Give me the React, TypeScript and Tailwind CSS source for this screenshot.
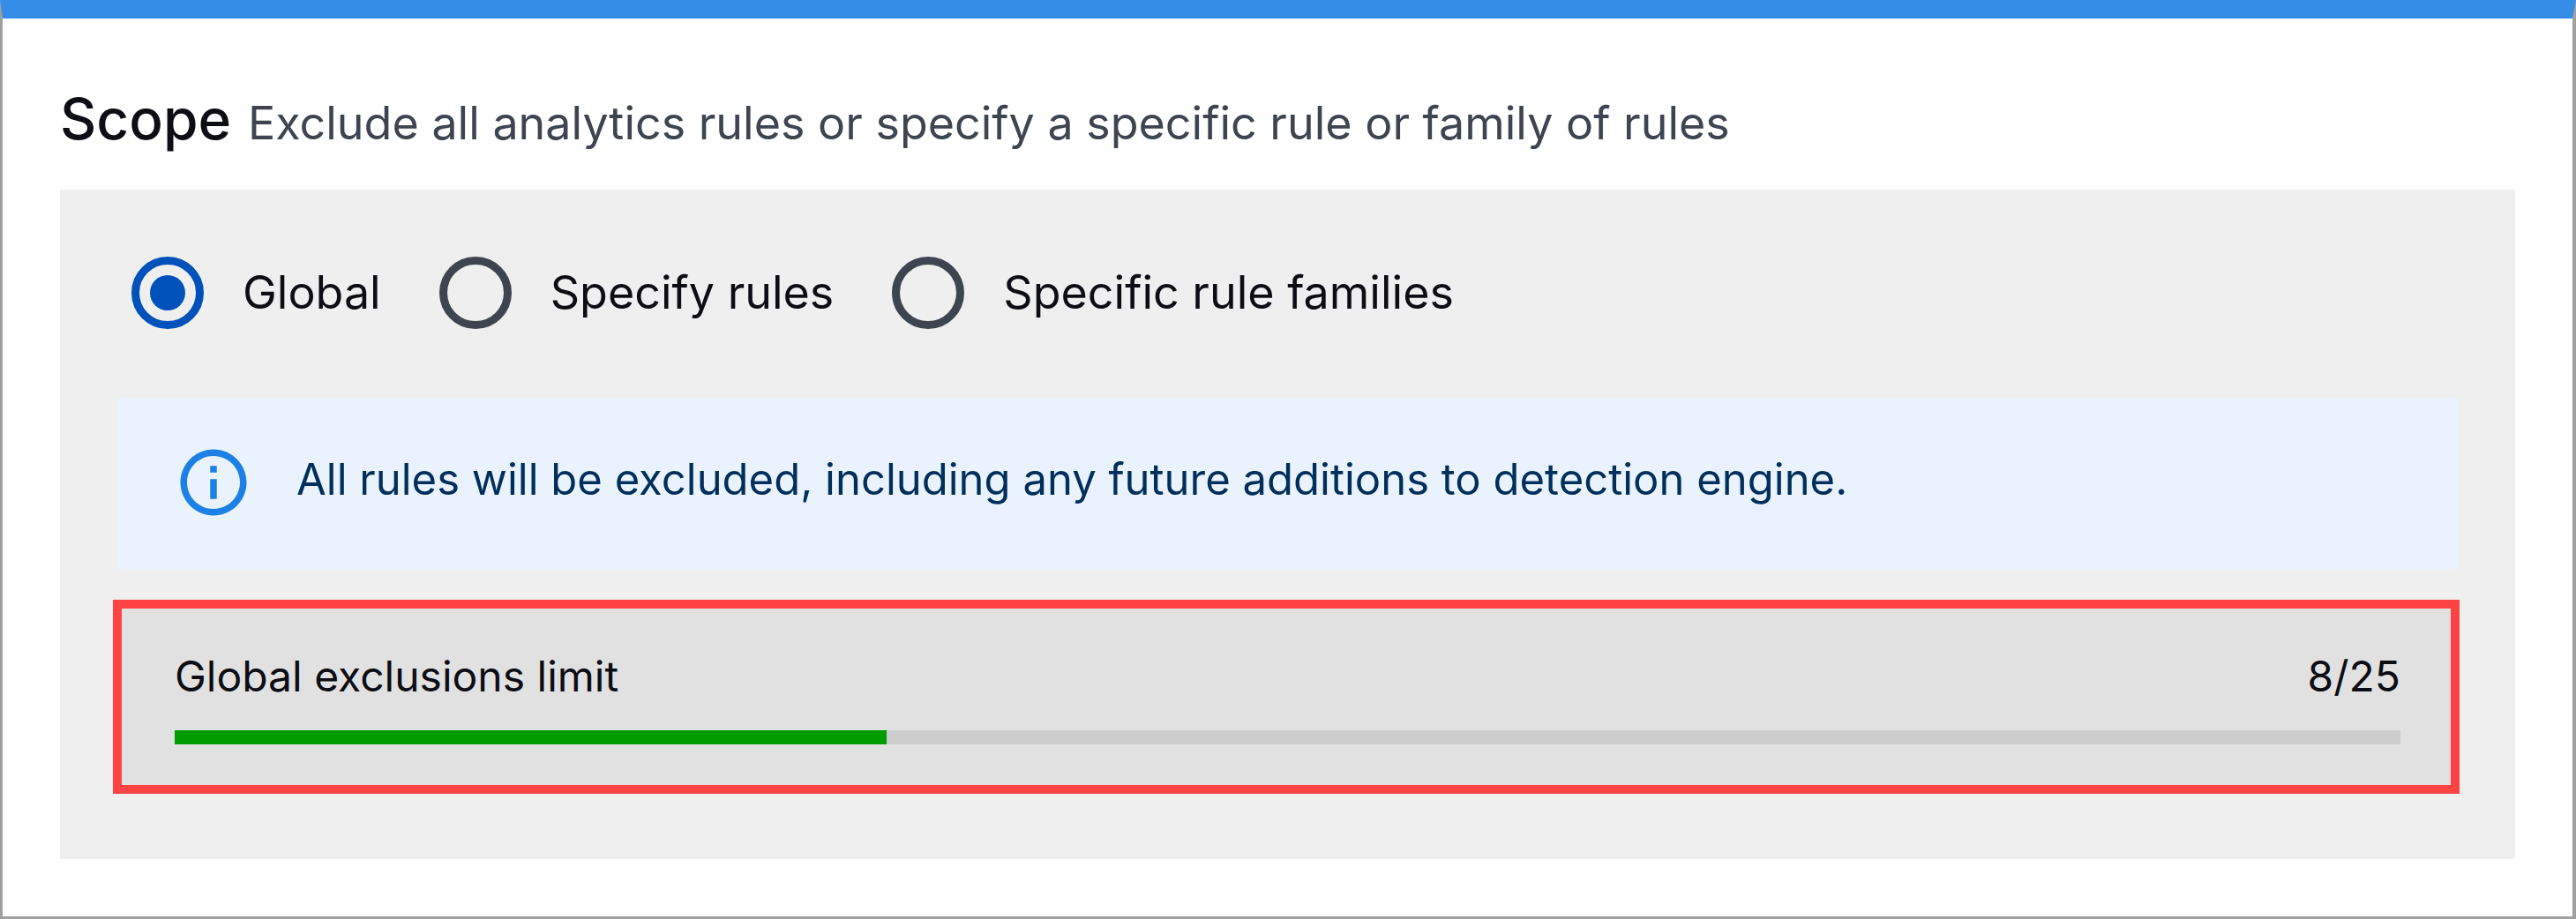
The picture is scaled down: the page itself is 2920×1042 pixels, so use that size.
import { useState } from "react";

const scopes = ["Global", "Specify rules", "Specific rule families"];

const used = 8;
const limit = 25;

function InfoIcon() {
  return (
    <svg
      viewBox="0 0 24 24"
      className="size-[90px] shrink-0 fill-[#1c80e6]"
      aria-hidden="true"
    >
      <path d="M11 7h2v2h-2zm0 4h2v6h-2zm1-9C6.480 2 2 6.480 2 12s4.480 10 10 10 10-4.480 10-10S17.520 2 12 2zm0 18c-4.410 0-8-3.590-8-8s3.590-8 8-8 8 3.590 8 8-3.590 8-8 8z" />
    </svg>
  );
}

function ScopeOptions() {
  const [selected, setSelected] = useState(scopes[0]);
  return (
    <fieldset
      aria-labelledby="scope-title"
      className="flex flex-wrap items-center gap-x-[66px] pl-[21px]"
    >
      {scopes.map((scope) => (
        <label
          key={scope}
          className="flex items-center gap-[44px] text-[52px] leading-[84px] text-[#0d0d14]"
        >
          <input
            type="radio"
            name="scope"
            value={scope}
            checked={selected === scope}
            onChange={() => setSelected(scope)}
            className="grid size-[82px] shrink-0 appearance-none place-content-center rounded-full border-[9px] border-[#3f4550] before:size-[40px] before:rounded-full checked:border-[#0052ba] checked:before:bg-[#0052ba]"
          />
          {scope}
        </label>
      ))}
    </fieldset>
  );
}

function ExclusionLimit() {
  return (
    <section className="mt-[35px] mr-[3px] border-10 border-[#ff4242] bg-[#e1e1e1] pt-[40px] pr-[57px] pb-[46px] pl-[60px]">
      <div className="flex justify-between text-[48px] leading-[74px] text-[#0d0d14]">
        <span id="limit-label">Global exclusions limit</span>
        <span>
          {used}/{limit}
        </span>
      </div>
      <div
        role="progressbar"
        aria-labelledby="limit-label"
        aria-valuenow={used}
        aria-valuemin={0}
        aria-valuemax={limit}
        className="mt-[24px] h-4 bg-[#cdcdcd]"
      >
        <div
          className="h-full bg-[#009c00]"
          style={{ width: `${(used / limit) * 100}%` }}
        />
      </div>
    </section>
  );
}

export default function App() {
  return (
    <main className="border-t-[21px] border-r-4 border-b-3 border-l-3 border-[#a0a0a0] border-t-[#358de7] bg-white px-[65px] pt-[74px] pb-[65px] font-['Inter',sans-serif]">
      <header className="flex items-baseline gap-[19px]">
        <h1
          id="scope-title"
          className="text-[64px] leading-[80px] font-medium text-[#0d0d14]"
        >
          Scope
        </h1>
        <p className="text-[52px] leading-[64px] text-[#3f4550]">
          Exclude all analytics rules or specify a specific rule or family of
          rules
        </p>
      </header>
      <div className="mt-[40px] bg-[#efefef] px-[60px] pt-[75px] pb-[74px]">
        <ScopeOptions />
        <div className="mx-[5px] mt-[78px] flex items-start gap-[49px] rounded-[4px] bg-[#eaf3fd] pt-[50px] pb-[53px] pl-[64px]">
          <InfoIcon />
          <p className="text-[49px] leading-[84px] text-[#002f5c]">
            All rules will be excluded, including any future additions to
            detection engine.
          </p>
        </div>
        <ExclusionLimit />
      </div>
    </main>
  );
}
